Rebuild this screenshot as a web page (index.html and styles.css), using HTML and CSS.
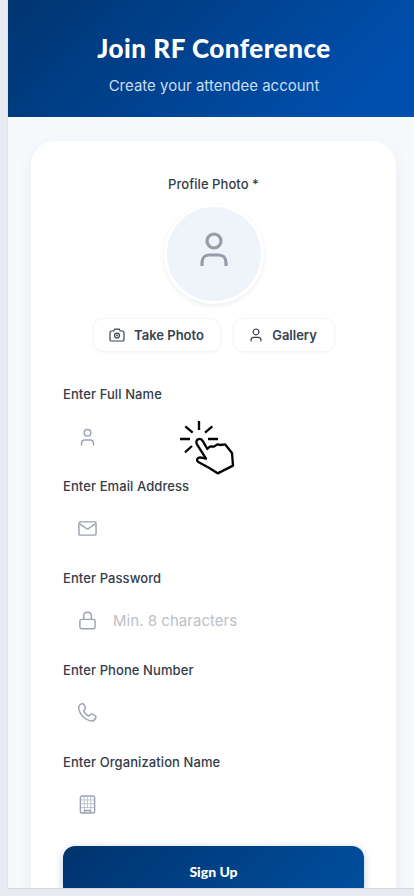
FILE: index.html
```html
<!DOCTYPE html>
<html lang="en">
<head>
<meta charset="utf-8">
<title>Join RF Conference</title>
<link rel="stylesheet" href="styles.css">
</head>
<body>
<main class="screen">
  <header class="hero">
    <h1>Join RF Conference</h1>
    <p>Create your attendee account</p>
  </header>
  <form class="card">
    <div class="profile-label">Profile Photo *</div>
    <div class="avatar">
      <svg width="28" height="36" viewBox="0 0 28 36"><circle cx="14" cy="9" r="7"/><path d="M2 34v-3c0-5 3-8 7-8h10c4 0 7 3 7 8v3"/></svg>
    </div>
    <div class="photo-actions">
      <button type="button" class="take"><svg width="16" height="14" viewBox="0 0 16 14"><path d="M2.6 3h2.1l1.1-1.8h4.4L11.300 3h2.100q1.600 0 1.600 1.600v6.800q0 1.600-1.600 1.600H2.600Q1 13 1 11.400V4.600Q1 3 2.600 3z"/><circle cx="8" cy="7.600" r="2.500"/><circle cx="8" cy="7.600" r=".4"/></svg><span>Take Photo</span></button>
      <button type="button" class="gallery"><svg width="12" height="14" viewBox="0 0 12 14"><circle cx="6" cy="3.900" r="2.900"/><path d="M1 13.500v-1.200q0-3 3-3h4q3 0 3 3v1.200"/></svg><span>Gallery</span></button>
    </div>
    <div class="field">
      <label>Enter Full Name</label>
      <div class="input"><svg viewBox="0 0 20 20"><circle cx="10" cy="5" r="3.500"/><path d="M3.700 18.500v-2.200q0-3.600 3.600-3.600h5.400q3.600 0 3.600 3.600v2.200"/></svg></div>
    </div>
    <div class="field">
      <label>Enter Email Address</label>
      <div class="input"><svg viewBox="0 0 20 20"><rect x="1" y="3" width="18" height="14" rx="1.600"/><path d="m1.800 5.200 8.200 5.600 8.200-5.600"/></svg></div>
    </div>
    <div class="field">
      <label>Enter Password</label>
      <div class="input"><svg viewBox="0 0 20 20"><rect x="2" y="8.800" width="16" height="9.800" rx="1.800"/><path d="M6 8.500V5q0-3.600 4-3.600T14 5v3.500"/></svg><span>Min. 8 characters</span></div>
    </div>
    <div class="field">
      <label>Enter Phone Number</label>
      <div class="input"><svg viewBox="0 0 20 20"><path d="M3.500 1c1.200-.5 2.400-.2 3 1l1.100 2.500c.3.800.1 1.500-.4 2.100l-.9 1.100c-.4.500-.4.900-.1 1.400 1.100 1.800 2.600 3.300 4.400 4.300.5.300 1 .2 1.400-.2l1.100-1c.6-.5 1.300-.7 2-.4l2.500 1.200c1.200.6 1.600 1.700 1 2.900-1.100 2.500-3.300 3.500-5.900 2.700C6.700 17 2.600 12.700 1 7c-.7-2.500.2-5 2.500-6z"/></svg></div>
    </div>
    <div class="field">
      <label>Enter Organization Name</label>
      <div class="input"><svg viewBox="0 0 20 20"><rect x="2.500" y="1" width="15" height="18" rx="2"/><path class="fine" d="M3 5.200h14M3 9.200h14M3 13.200h14M6.500 1v17M10 1v13M13.500 1v17"/><path d="M7 19v-2.700h6V19"/></svg></div>
    </div>
    <button type="button" class="signup">Sign Up</button>
  </form>
</main>
<svg class="pointer" width="80" height="75" viewBox="0 0 240 225"><path d="M87 33v27M46 49l22 19M127 49l-22 19M30 87h30M114 87h30M45 127l21-19"/><path class="hand" d="M112 117 99 94C91 80 73 89 81 103l27 43-18-4c-9 1-12 9-5 14l33 18 25 16 46-23-3-38-21-26-13 2-10-2-10 7-11-1-9 7z"/></svg>
</body>
</html>
```

FILE: styles.css
```css
* { box-sizing: border-box; }
body {
  margin: 0;
  height: 896px;
  overflow: hidden;
  background: #e8ebf2;
  font-family: Inter, "Liberation Sans", sans-serif;
  color: #343c48;
}
.screen {
  height: 889px;
  margin-left: 7px;
  overflow: hidden;
  background: #f7fafd;
  border-left: 1px solid #dde4eb;
  border-bottom: 1px solid #d5d9df;
}
.hero {
  height: 117px;
  padding-top: 31px;
  padding-left: 6px;
  text-align: center;
  background: linear-gradient(135deg, #003570 0%, #0050b0 90%);
}
h1 {
  margin: 0;
  font: 900 26px/34px Lato, sans-serif;
  letter-spacing: .5px;
  color: #fff;
}
.hero p {
  margin: 10px 0 0;
  font-size: 15px;
  line-height: 22px;
  color: #c8dcf2;
}
.card {
  width: 365px;
  height: 850px;
  margin: 24px 0 0 23px;
  padding: 32px 32px 0;
  border-radius: 24px;
  background: #fff;
  box-shadow: 0 6px 18px rgba(30, 60, 90, .08);
}
.profile-label {
  font-size: 13px;
  font-weight: 500;
  line-height: 22px;
  text-align: center;
  letter-spacing: .06px;
}
.avatar {
  width: 100px;
  height: 100px;
  margin: 9px auto 0;
  display: flex;
  align-items: center;
  justify-content: center;
  padding-bottom: 9px;
  border: 3px solid #fff;
  border-radius: 50%;
  background: #eff3fa;
  box-shadow: 0 2px 5px rgba(20, 40, 70, .08);
}
svg { display: block; flex: none; fill: none; stroke: currentColor; }
.avatar svg { color: #959daa; stroke-width: 3.200; }
.photo-actions {
  display: flex;
  justify-content: center;
  gap: 12px;
  margin-top: 14px;
}
.photo-actions button {
  height: 34px;
  padding: 0;
  display: flex;
  align-items: center;
  justify-content: center;
  gap: 9px;
  font: 600 13px/20px Inter, sans-serif;
  color: #384250;
  background: #fff;
  border: 1px solid #f3f5f7;
  border-radius: 10px;
  box-shadow: 0 1px 3px rgba(20, 40, 70, .04);
}
.photo-actions .take { width: 128px; }
.photo-actions .gallery { width: 102px; gap: 10px; }
.photo-actions svg { stroke-width: 1.200; }
.field {
  height: 91.900px;
}
.photo-actions + .field { margin-top: 32px; }
.field label {
  display: block;
  font-size: 13px;
  font-weight: 500;
  line-height: 20px;
  letter-spacing: .09px;
}
.input {
  height: 48px;
  margin-top: 9px;
  padding-left: 15px;
  display: flex;
  align-items: center;
  gap: 16px;
  font-size: 15px;
  letter-spacing: .03px;
  color: #bdc0c5;
}
.input svg { width: 19px; height: 19px; color: #9aa3af; stroke-width: 1.500; }
.input .fine { stroke-width: .6; }
.signup {
  display: block;
  width: 301px;
  height: 52px;
  margin-top: 3px;
  padding: 0;
  border: 0;
  border-radius: 12px;
  background: linear-gradient(135deg, #00336e, #004f9f);
  box-shadow: 0 2px 8px rgba(0, 80, 170, .28);
  color: #fff;
  font: 900 14px/20px Lato, sans-serif;
}
.pointer {
  position: absolute;
  left: 170px;
  top: 410px;
  color: #050505;
  stroke-width: 7;
}
.pointer .hand { fill: #fff; stroke-linejoin: round; }
```
